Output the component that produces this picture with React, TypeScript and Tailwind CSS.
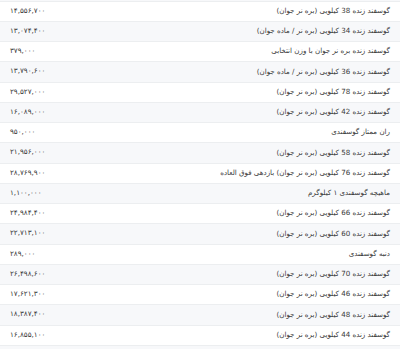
const rows = [
  { name: 'گوسفند زنده 38 کیلویی (بره نر جوان)', price: '۱۴,۵۵۶,۷۰۰' },
  { name: 'گوسفند زنده 34 کیلویی (بره نر / ماده جوان)', price: '۱۳,۰۷۴,۴۰۰' },
  { name: 'گوسفند زنده بره نر جوان با وزن انتخابی', price: '۳۷۹,۰۰۰' },
  { name: 'گوسفند زنده 36 کیلویی (بره نر / ماده جوان)', price: '۱۳,۷۹۰,۶۰۰' },
  { name: 'گوسفند زنده 78 کیلویی (بره نر جوان)', price: '۲۹,۵۲۷,۰۰۰' },
  { name: 'گوسفند زنده 42 کیلویی (بره نر جوان)', price: '۱۶,۰۸۹,۰۰۰' },
  { name: 'ران ممتاز گوسفندی', price: '۹۵۰,۰۰۰' },
  { name: 'گوسفند زنده 58 کیلویی (بره نر جوان)', price: '۲۱,۹۵۶,۰۰۰' },
  { name: 'گوسفند زنده 76 کیلویی (بره نر جوان) بازدهی فوق العاده', price: '۲۸,۷۶۹,۹۰۰' },
  { name: 'ماهیچه گوسفندی ۱ کیلوگرم', price: '۱,۱۰۰,۰۰۰' },
  { name: 'گوسفند زنده 66 کیلویی (بره نر جوان)', price: '۲۴,۹۸۴,۴۰۰' },
  { name: 'گوسفند زنده 60 کیلویی (بره نر جوان)', price: '۲۲,۷۱۳,۱۰۰' },
  { name: 'دنبه گوسفندی', price: '۲۸۹,۰۰۰' },
  { name: 'گوسفند زنده 70 کیلویی (بره نر جوان)', price: '۲۶,۴۹۸,۶۰۰' },
  { name: 'گوسفند زنده 46 کیلویی (بره نر جوان)', price: '۱۷,۶۲۱,۳۰۰' },
  { name: 'گوسفند زنده 48 کیلویی (بره نر جوان)', price: '۱۸,۳۸۷,۴۰۰' },
  { name: 'گوسفند زنده 44 کیلویی (بره نر جوان)', price: '۱۶,۸۵۵,۱۰۰' },
];

export default function App() {
  return (
    <div
      className="w-[400px] h-[349px] overflow-hidden bg-white text-[#3a3a3a]"
      style={{ fontFamily: '"DejaVu Sans", sans-serif' }}
    >
      <div className="h-[1.5px] bg-[#f7f8fa] border-b border-[#eceef0]" />
      {rows.map((row, i) => (
        <div
          key={i}
          className={`flex h-[20.25px] items-center border-b border-[#eceef0] ${
            i % 2 === 1 ? 'bg-[#f7f8fa]' : 'bg-white'
          }`}
        >
          <div dir="ltr" className="w-[120px] shrink-0 pl-[10px] text-left text-[7.2px]">
            {row.price}
          </div>
          <div dir="rtl" className="flex-1 pr-[10px] text-right text-[7.1px]">
            {row.name}
          </div>
        </div>
      ))}
      <div className="h-[20px] bg-[#f7f8fa]" />
    </div>
  );
}
